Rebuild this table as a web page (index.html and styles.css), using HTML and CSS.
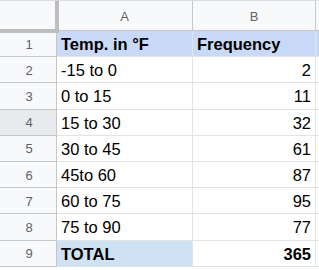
FILE: index.html
```html
<!DOCTYPE html>
<html>
<head>
<meta charset="utf-8">
<link rel="stylesheet" href="styles.css">
</head>
<body>
<div class="sheet">
  <div class="corner"></div>
  <div class="colhead">A</div>
  <div class="colhead">B</div>
  <div class="colhead rest"></div>

  <div class="rowhead">1</div>
  <div class="cell bold head-fill">Temp. in °F</div>
  <div class="cell bold head-fill">Frequency</div>
  <div class="cell rest head-fill"></div>

  <div class="rowhead">2</div>
  <div class="cell">-15 to 0</div>
  <div class="cell num">2</div>
  <div class="cell rest"></div>

  <div class="rowhead">3</div>
  <div class="cell">0 to 15</div>
  <div class="cell num">11</div>
  <div class="cell rest"></div>

  <div class="rowhead active">4</div>
  <div class="cell">15 to 30</div>
  <div class="cell num">32</div>
  <div class="cell rest"></div>

  <div class="rowhead">5</div>
  <div class="cell">30 to 45</div>
  <div class="cell num">61</div>
  <div class="cell rest"></div>

  <div class="rowhead">6</div>
  <div class="cell">45to 60</div>
  <div class="cell num">87</div>
  <div class="cell rest"></div>

  <div class="rowhead">7</div>
  <div class="cell">60 to 75</div>
  <div class="cell num">95</div>
  <div class="cell rest"></div>

  <div class="rowhead">8</div>
  <div class="cell">75 to 90</div>
  <div class="cell num">77</div>
  <div class="cell rest"></div>

  <div class="rowhead">9</div>
  <div class="cell bold total-fill">TOTAL</div>
  <div class="cell num bold">365</div>
  <div class="cell rest"></div>
</div>
</body>
</html>
```

FILE: styles.css
```css
* { box-sizing: border-box; }
html, body { margin: 0; padding: 0; background: #fff; }
body { font-family: "Liberation Sans", Arial, sans-serif; }

.sheet {
  display: grid;
  grid-template-columns: 57px 136px 123px 1fr;
  grid-template-rows: 30px repeat(9, 26.2px);
  width: 319px;
  height: 270px;
  overflow: hidden;
  border-top: 1px solid #dadce0;
}

.corner {
  background: #f8f9fa;
  border-right: 1px solid #c4c7c5;
  position: relative;
}
.corner::before {
  content: "";
  position: absolute;
  left: 0; top: -1px;
  width: 55px; height: 29px;
  border-right: 4px solid #bdbdbd;
  border-bottom: 4px solid #bdbdbd;
}

.colhead {
  background: #f8f9fa;
  color: #5f6368;
  font-size: 13px;
  display: flex;
  align-items: center;
  justify-content: center;
  padding-top: 1px;
  border-right: 1px solid #c4c7c5;
  border-bottom: 1px solid #c4c7c5;
}
.colhead.rest { border-right: none; }

.rowhead {
  background: #f8f9fa;
  color: #5f6368;
  font-size: 13px;
  display: flex;
  align-items: center;
  justify-content: center;
  padding-left: 2px;
  padding-top: 1px;
  border-right: 1px solid #c4c7c5;
  border-bottom: 1px solid #c4c7c5;
}
.rowhead.active { background: #e8eaed; }

.cell {
  font-size: 16.5px;
  color: #000;
  display: flex;
  align-items: center;
  padding: 2px 4px 0 4px;
  border-right: 1px solid #e2e3e3;
  border-bottom: 1px solid #e2e3e3;
  white-space: nowrap;
}
.cell.rest { border-right: none; }
.num { justify-content: flex-end; }
.bold { font-weight: bold; }
.head-fill { background: #c9daf8; }
.total-fill { background: #cfe2f3; }
```
